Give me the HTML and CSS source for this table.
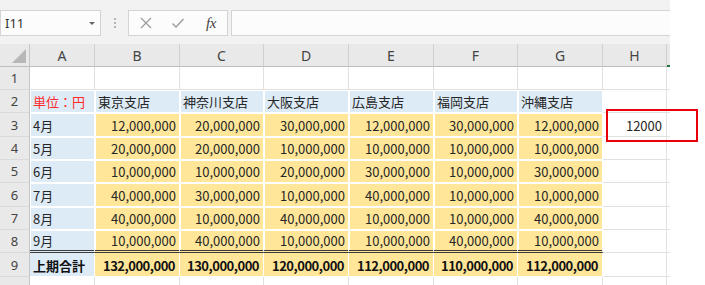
FILE: index.html
```html
<!DOCTYPE html>
<html lang="ja">
<head>
<meta charset="utf-8">
<link rel="stylesheet" href="styles.css">
</head>
<body>
<div class="page">
  <div class="app">
    <div class="fbar">
      <div class="namebox"><span class="nb-text">I11</span><span class="nb-arrow"></span></div>
      <div class="dots"><i></i><i></i><i></i></div>
      <div class="fbtns">
        <svg class="ic" width="12" height="12" viewBox="0 0 12 12"><path d="M1 1L11 11M11 1L1 11" stroke="#9b9b9b" stroke-width="1.2" fill="none"/></svg>
        <svg class="ic" width="14" height="12" viewBox="0 0 14 12"><path d="M1.5 6.5L5 10L12.5 2" stroke="#9b9b9b" stroke-width="1.3" fill="none"/></svg>
        <span class="fx">fx</span>
      </div>
      <div class="finput"></div>
    </div>
    <div class="sheet">
      <div class="corner"><span class="tri"></span></div>
      <div class="ch">A</div><div class="ch">B</div><div class="ch">C</div><div class="ch">D</div><div class="ch">E</div><div class="ch">F</div><div class="ch">G</div><div class="ch">H</div><div class="ch sel"></div>

      <div class="rh">1</div>
      <div class="c"></div><div class="c"></div><div class="c"></div><div class="c"></div><div class="c"></div><div class="c"></div><div class="c"></div><div class="c"></div><div class="c last"></div>

      <div class="rh">2</div>
      <div class="c blue red">単位：円</div><div class="c blue">東京支店</div><div class="c blue">神奈川支店</div><div class="c blue">大阪支店</div><div class="c blue">広島支店</div><div class="c blue">福岡支店</div><div class="c blue">沖縄支店</div><div class="c"></div><div class="c last"></div>

      <div class="rh">3</div>
      <div class="c blue">4月</div><div class="c yel num">12,000,000</div><div class="c yel num">20,000,000</div><div class="c yel num">30,000,000</div><div class="c yel num">12,000,000</div><div class="c yel num">30,000,000</div><div class="c yel num">12,000,000</div><div class="c num plain">12000</div><div class="c last"></div>

      <div class="rh">4</div>
      <div class="c blue">5月</div><div class="c yel num">20,000,000</div><div class="c yel num">20,000,000</div><div class="c yel num">10,000,000</div><div class="c yel num">10,000,000</div><div class="c yel num">10,000,000</div><div class="c yel num">10,000,000</div><div class="c"></div><div class="c last"></div>

      <div class="rh">5</div>
      <div class="c blue">6月</div><div class="c yel num">10,000,000</div><div class="c yel num">10,000,000</div><div class="c yel num">20,000,000</div><div class="c yel num">30,000,000</div><div class="c yel num">10,000,000</div><div class="c yel num">30,000,000</div><div class="c"></div><div class="c last"></div>

      <div class="rh">6</div>
      <div class="c blue">7月</div><div class="c yel num">40,000,000</div><div class="c yel num">30,000,000</div><div class="c yel num">10,000,000</div><div class="c yel num">40,000,000</div><div class="c yel num">10,000,000</div><div class="c yel num">10,000,000</div><div class="c"></div><div class="c last"></div>

      <div class="rh">7</div>
      <div class="c blue">8月</div><div class="c yel num">40,000,000</div><div class="c yel num">10,000,000</div><div class="c yel num">40,000,000</div><div class="c yel num">10,000,000</div><div class="c yel num">10,000,000</div><div class="c yel num">40,000,000</div><div class="c"></div><div class="c last"></div>

      <div class="rh">8</div>
      <div class="c blue dbl">9月</div><div class="c yel num dbl">10,000,000</div><div class="c yel num dbl">40,000,000</div><div class="c yel num dbl">10,000,000</div><div class="c yel num dbl">10,000,000</div><div class="c yel num dbl">40,000,000</div><div class="c yel num dbl">10,000,000</div><div class="c"></div><div class="c last"></div>

      <div class="rh">9</div>
      <div class="c blue tot">上期合計</div><div class="c yel num tot">132,000,000</div><div class="c yel num tot">130,000,000</div><div class="c yel num tot">120,000,000</div><div class="c yel num tot">112,000,000</div><div class="c yel num tot">110,000,000</div><div class="c yel num tot">112,000,000</div><div class="c"></div><div class="c last"></div>

      <div class="rh"></div>
      <div class="c"></div><div class="c"></div><div class="c"></div><div class="c"></div><div class="c"></div><div class="c"></div><div class="c"></div><div class="c"></div><div class="c last"></div>
    </div>
  </div>
  <div class="mark"></div>
</div>
</body>
</html>
```

FILE: styles.css
```css
* { box-sizing: border-box; }
html, body { margin: 0; padding: 0; background: #fff; }
body { width: 705px; height: 285px; overflow: hidden; }
.page { position: relative; width: 705px; height: 285px; }
.app { width: 670px; height: 285px; overflow: hidden; background: #f2f2f2; }

.fbar { height: 44px; display: flex; align-items: flex-start; padding-top: 10px; }
.namebox { width: 101px; height: 26px; background: #fcfcfc; border: 1px solid #d4d4d4; display: flex; align-items: center; justify-content: space-between; padding: 0 5px 0 4px; }
.nb-text { font-family: "Noto Sans", sans-serif; font-size: 13px; color: #333; }
.nb-arrow { width: 0; height: 0; border-left: 3px solid transparent; border-right: 3px solid transparent; border-top: 3px solid #666; margin-top: 1px; }
.dots { width: 27px; height: 26px; display: flex; flex-direction: column; align-items: center; justify-content: center; gap: 2px; }
.dots i { display: block; width: 2px; height: 2px; background: #b4b4b4; }
.fbtns { width: 100px; height: 26px; background: #fcfcfc; border: 1px solid #d4d4d4; display: flex; align-items: center; padding-left: 11px; gap: 19px; }
.fx { font-family: "Liberation Serif", serif; font-style: italic; font-size: 15px; color: #444; margin-left: 2px; letter-spacing: -0.5px; }
.finput { flex: 1; height: 26px; margin-left: 3px; background: #fcfcfc; border: 1px solid #d4d4d4; border-right: none; }

.sheet { display: grid; grid-template-columns: 30px 65px 85px 84px 85px 85px 84px 85px 64px 3px; grid-template-rows: 23px 23px 23px 24px 23px 23px 24px 23px 23px 24px 10px; background: #fff; font-family: "Noto Sans CJK JP", sans-serif; font-size: 13px; color: #262626; }

.corner { background: #e9e9e9; border-right: 1px solid #c6c6c6; border-bottom: 1px solid #bdbdbd; display: flex; align-items: flex-end; justify-content: flex-end; padding: 0 3px 3px 0; }
.tri { width: 14px; height: 14px; background: #b7b7b7; clip-path: polygon(100% 0, 100% 100%, 0 100%); }
.ch { background: #e9e9e9; border-right: 1px solid #d0d0d0; border-bottom: 1px solid #bdbdbd; display: flex; align-items: center; justify-content: center; font-family: "Noto Sans", sans-serif; font-size: 14px; color: #444; padding-top: 1px; }
.ch.sel { border-right: none; border-bottom: 2px solid #217346; }

.rh { background: #e9e9e9; border-right: 1px solid #c6c6c6; border-bottom: 1px solid #dadada; display: flex; align-items: center; justify-content: center; font-family: "Noto Sans", sans-serif; font-size: 13px; color: #444; }

.c { border-right: 1px solid #e1e1e1; border-bottom: 1px solid #e1e1e1; display: flex; align-items: center; padding: 1px 3px 0 3px; white-space: nowrap; overflow: hidden; }
.c.last { border-right: none; }
.c.blue { background: #ddebf7; border-color: #fff; box-shadow: inset 1px 1px 0 #fff; }
.c.yel { background: #ffe699; border-color: #fff; box-shadow: inset 1px 1px 0 #fff; }
.c.num { justify-content: flex-end; padding-right: 3px; }
.c.plain { padding-right: 4px; }
.c.red { color: #ff2a2a; }
.c.dbl { border-bottom: 3px double #3a3a3a; }
.c.tot { font-weight: bold; color: #111; box-shadow: none; }
.c.num.tot { letter-spacing: -0.5px; padding-right: 4px; }

.mark { position: absolute; left: 606px; top: 109px; width: 92px; height: 33px; border: 2px solid #e8000b; }
```
